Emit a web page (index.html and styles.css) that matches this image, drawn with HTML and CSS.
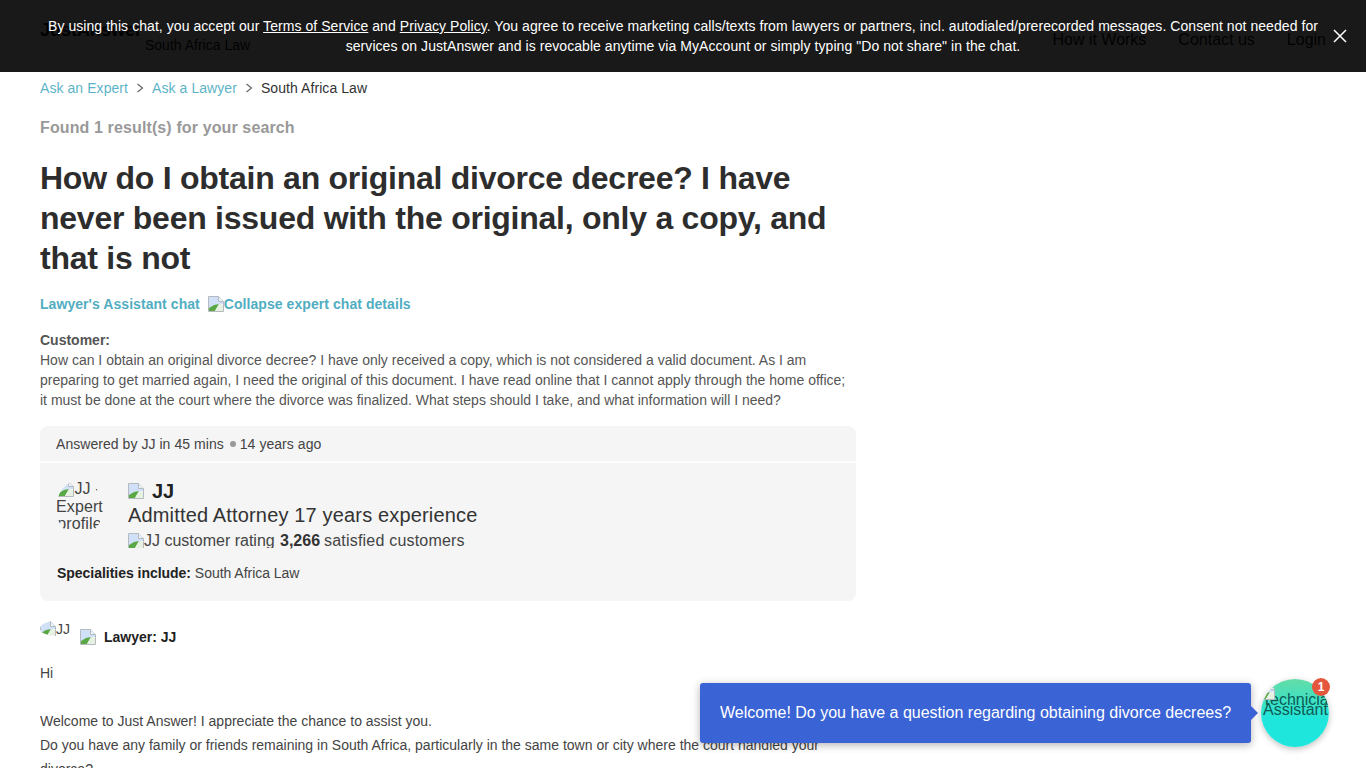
FILE: index.html
```html
<!DOCTYPE html>
<html lang="en">
<head>
<meta charset="utf-8">
<title>South Africa Law</title>
<link rel="stylesheet" href="styles.css">
</head>
<body>
<svg class="defs" width="0" height="0" aria-hidden="true">
  <symbol id="broken" viewBox="0 0 16 16">
    <path d="M.5.5h10l5 5v10H.5z" fill="#fff" stroke="#b5b9c0"/>
    <path d="M1 1h9.500v5H15v2l-6 1-8 4z" fill="#cfe0f7"/>
    <path d="M10.500.5v5h5" fill="#eef3fa" stroke="#b5b9c0"/>
    <path d="M1 15v-3l5-3 5-1-4 7z" fill="#5aa845"/>
    <path d="M7 15l4-7 4 1v6z" fill="#e6f1e2"/>
  </symbol>
</svg>
<header class="site-header">
  <div class="brand">
    <span class="logo">JustAnswer</span>
    <span class="brand-sub">South Africa Law</span>
  </div>
  <nav class="site-nav">
    <span>How it Works</span>
    <span>Contact us</span>
    <span>Login</span>
  </nav>
</header>

<main class="page">
  <div class="crumbs">
    <a class="link" href="#">Ask an Expert</a>
    <svg class="chev" width="8" height="10" viewBox="0 0 8 10"><path d="M1.500 1l5 4-5 4" fill="none" stroke="#666" stroke-width="1.2"/></svg>
    <a class="link" href="#">Ask a Lawyer</a>
    <svg class="chev" width="8" height="10" viewBox="0 0 8 10"><path d="M1.500 1l5 4-5 4" fill="none" stroke="#666" stroke-width="1.2"/></svg>
    <span>South Africa Law</span>
  </div>
  <p class="found">Found 1 result(s) for your search</p>
  <h1 class="title">How do I obtain an original divorce decree? I have never been issued with the original, only a copy, and that is not</h1>
  <div class="chat-toggle">
    <span>Lawyer's Assistant chat</span>
    <span class="collapse"><svg class="bk"><use href="#broken"/></svg>Collapse expert chat details</span>
  </div>
  <div class="question">
    <strong>Customer:</strong>
    <p>How can I obtain an original divorce decree? I have only received a copy, which is not considered a valid document. As I am preparing to get married again, I need the original of this document. I have read online that I cannot apply through the home office; it must be done at the court where the divorce was finalized. What steps should I take, and what information will I need?</p>
  </div>
  <section class="card">
    <div class="card-top">Answered by JJ in 45 mins<i class="dot"></i>14 years ago</div>
    <div class="card-body">
      <div class="expert">
        <div class="avatar"><svg class="bk"><use href="#broken"/></svg>JJ - Expert profile</div>
        <div class="expert-info">
          <div class="name"><svg class="bk"><use href="#broken"/></svg><b>JJ</b></div>
          <div class="role">Admitted Attorney 17 years experience</div>
          <div class="rating"><span class="rating-img"><svg class="bk"><use href="#broken"/></svg>JJ customer rating</span><b>3,266</b><span class="sat">satisfied customers</span></div>
        </div>
      </div>
      <div class="spec"><b>Specialities include:</b> South Africa Law</div>
    </div>
  </section>
  <div class="lawyer">
    <span class="mini"><svg class="bk"><use href="#broken"/></svg>JJ</span>
    <svg class="bk lawyer-badge"><use href="#broken"/></svg>
    <b>Lawyer: JJ</b>
  </div>
  <div class="answer">
    <p class="hi">Hi</p>
    <p>Welcome to Just Answer! I appreciate the chance to assist you.</p>
    <p>Do you have any family or friends remaining in South Africa, particularly in the same town or city where the court handled your divorce?</p>
  </div>
</main>

<div class="consent">
  <p>By using this chat, you accept our <a href="#">Terms of Service</a> and <a href="#">Privacy Policy</a>. You agree to receive marketing calls/texts from lawyers or partners, incl. autodialed/prerecorded messages. Consent not needed for services on JustAnswer and is revocable anytime via MyAccount or simply typing "Do not share" in the chat.</p>
  <svg class="close" width="14" height="14" viewBox="0 0 14 14"><path d="M1 1l12 12M13 1L1 13" stroke="#fff" stroke-width="1.5"/></svg>
</div>

<div class="chat-widget">
  <div class="bubble">Welcome! Do you have a question regarding obtaining divorce decrees?</div>
  <div class="launcher">
    <div class="launcher-text"><svg class="bk launcher-img"><use href="#broken"/></svg>Technician Assistant</div>
    <span class="badge">1</span>
  </div>
</div>
</body>
</html>
```
FILE: styles.css
```css
* { box-sizing: border-box; }
html, body { margin: 0; height: 768px; overflow: hidden; }
body { font-family: "Liberation Sans", Arial, sans-serif; color: #333; background: #fff; position: relative; }
p { margin: 0; }
.defs { position: absolute; }
.bk { width: 16px; height: 16px; flex: none; display: inline-block; vertical-align: -3px; }

.site-header { height: 72px; padding: 0 40px; display: flex; justify-content: space-between; align-items: flex-start; color: #111; }
.brand { width: 300px; padding-top: 20px; }
.logo { font-size: 18px; line-height: 20px; font-weight: 700; display: block; }
.brand-sub { display: block; margin: -3px 0 0 105px; font-size: 14px; line-height: 16px; }
.site-nav { display: flex; gap: 32px; padding: 30px 0 0 0; font-size: 16px; line-height: 20px; }

.page { padding: 0 0 0 40px; width: 856px; }
.crumbs { display: flex; align-items: center; height: 32px; font-size: 14px; color: #333; letter-spacing: .07px; }
.crumbs .chev { margin: 0 8px; }
.link { color: #5eb4c7; text-decoration: none; }
.found { margin-top: 12px; font-size: 16px; line-height: 24px; font-weight: 700; color: #999; letter-spacing: .12px; }
.title { margin: 18px 0 0; font-size: 32px; line-height: 40px; font-weight: 700; color: #2d2d2d; width: 816px; letter-spacing: -.25px; }
.chat-toggle { margin-top: 16px; display: flex; gap: 8px; font-size: 14px; line-height: 20px; font-weight: 700; color: #51adc1; letter-spacing: .06px; }
.question { margin-top: 16px; font-size: 14px; line-height: 20px; color: #555; }
.question strong { display: block; }
.card { margin-top: 16px; width: 816px; height: 175px; border-radius: 8px; background: #f5f5f5; overflow: hidden; }
.card-top { height: 36px; padding: 0 16px; display: flex; align-items: center; font-size: 14px; color: #444; border-bottom: 1px solid #fbfbfb; letter-spacing: .05px; }
.dot { width: 6px; height: 6px; border-radius: 50%; background: #999; margin: 0 4px 0 6px; }
.card-body { padding: 18px 17px 0 16px; border-top: 1px solid #fff; }
.expert { display: flex; gap: 25px; height: 69px; }
.avatar { width: 47px; height: 56px; margin-top: -1px; border-radius: 50%; overflow: hidden; font-size: 16px; line-height: 17.5px; text-align: center; color: #444; flex: none; letter-spacing: .1px; }
.name { display: flex; align-items: center; gap: 8px; font-size: 20px; line-height: 20px; color: #222; }
.role { font-size: 20px; line-height: 28px; color: #333; letter-spacing: .16px; }
.rating { display: flex; font-size: 16px; line-height: 20px; margin-top: 2px; color: #444; white-space: nowrap; }
.rating-img { width: 147px; height: 16px; line-height: 18px; overflow: hidden; margin-top: 1px; display: block; }
.rating b { margin-left: 5px; color: #333; }
.sat { margin-left: 4px; letter-spacing: .2px; }
.spec { margin-top: 13px; padding-left: 1px; font-size: 14px; line-height: 20px; color: #444; letter-spacing: -.03px; }
.spec b { color: #222; }
.lawyer { margin-top: 20px; display: flex; align-items: flex-start; height: 32px; font-size: 14px; color: #222; }
.mini { width: 32px; height: 15px; border-radius: 50%; overflow: hidden; font-size: 14px; line-height: 16px; white-space: nowrap; color: #444; display: block; }
.lawyer-badge { margin: 8px 8px 0 8px; }
.lawyer b { margin-top: 8px; line-height: 16px; }
.answer { margin-top: 8px; width: 790px; font-size: 14px; line-height: 24px; color: #444; }
.hi { margin-bottom: 24px; }

.consent { position: absolute; left: 0; top: 0; width: 1366px; height: 72px; padding: 16px 40px 0; background: rgba(0,0,0,.9); color: #fff; font-size: 14px; line-height: 20px; text-align: center; letter-spacing: .06px; }
.consent a { color: #fff; text-decoration: underline; }
.close { position: absolute; left: 1333px; top: 29px; }

.chat-widget { position: absolute; left: 700px; top: 679px; display: flex; align-items: center; gap: 10px; }
.bubble { position: relative; width: 551px; height: 60px; padding-left: 20px; display: flex; align-items: center; background: #3a63d6; border-radius: 3px; color: #fff; font-size: 16px; white-space: nowrap; box-shadow: 0 2px 8px rgba(0,0,0,.3); }
.bubble::after { content: ""; position: absolute; right: -7px; top: 23px; border-left: 7px solid #3a63d6; border-top: 7px solid transparent; border-bottom: 7px solid transparent; }
.launcher { position: relative; width: 68px; height: 68px; border-radius: 50%; background: linear-gradient(#63dca6, #1fe6dc 60%); box-shadow: 0 2px 6px rgba(0,0,0,.25); display: flex; justify-content: center; }
.launcher-text { position: relative; width: 68px; height: 68px; border-radius: 50%; overflow: hidden; text-align: center; color: #0d5a55; font-size: 16px; line-height: 10px; padding: 16px 0 0 1px; }
.launcher-img { position: absolute; left: -2px; top: 5px; }
.badge { position: absolute; left: 51px; top: -1px; width: 18px; height: 18px; border-radius: 50%; background: #e4573d; color: #fff; font-size: 12px; font-weight: 700; line-height: 18px; text-align: center; }
```
